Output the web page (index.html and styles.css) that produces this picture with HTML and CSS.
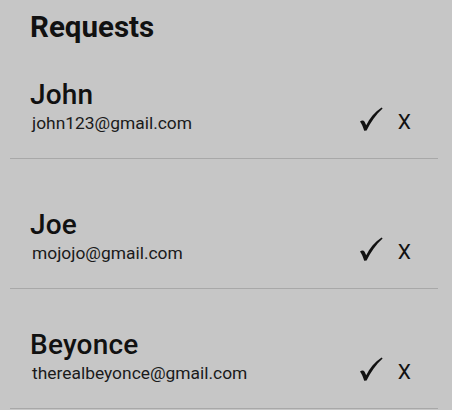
FILE: index.html
```html
<!DOCTYPE html>
<html>
<head>
<meta charset="utf-8">
<link rel="stylesheet" href="styles.css">
</head>
<body>
<div class="screen">
  <h1 class="title">Requests</h1>
  <ul class="list">
    <li class="row">
      <div class="info">
        <div class="name">John</div>
        <div class="email">john123@gmail.com</div>
      </div>
      <div class="actions">
        <svg class="accept" viewBox="0 0 24 24" width="24" height="24"><path d="M1 14.5 C2.8 13.2 4.6 13.2 5.6 14.8 L7.2 18.2 C10.5 11 15.5 5 22.6 0.4 L23.6 1.4 C17 7.5 11.5 15 7.6 23.4 L5.2 23.8 C4.2 20.4 2.8 17 1 14.5 Z"/></svg>
        <span class="reject">X</span>
      </div>
    </li>
    <li class="row">
      <div class="info">
        <div class="name">Joe</div>
        <div class="email">mojojo@gmail.com</div>
      </div>
      <div class="actions">
        <svg class="accept" viewBox="0 0 24 24" width="24" height="24"><path d="M1 14.5 C2.8 13.2 4.6 13.2 5.6 14.8 L7.2 18.2 C10.5 11 15.5 5 22.6 0.4 L23.6 1.4 C17 7.5 11.5 15 7.6 23.4 L5.2 23.8 C4.2 20.4 2.8 17 1 14.5 Z"/></svg>
        <span class="reject">X</span>
      </div>
    </li>
    <li class="row row-last">
      <div class="info">
        <div class="name">Beyonce</div>
        <div class="email">therealbeyonce@gmail.com</div>
      </div>
      <div class="actions">
        <svg class="accept" viewBox="0 0 24 24" width="24" height="24"><path d="M1 14.5 C2.8 13.2 4.6 13.2 5.6 14.8 L7.2 18.2 C10.5 11 15.5 5 22.6 0.4 L23.6 1.4 C17 7.5 11.5 15 7.6 23.4 L5.2 23.8 C4.2 20.4 2.8 17 1 14.5 Z"/></svg>
        <span class="reject">X</span>
      </div>
    </li>
  </ul>
</div>
</body>
</html>
```
FILE: styles.css
```css
html, body {
  margin: 0;
  padding: 0;
  background: #c6c6c6;
}
body {
  font-family: Roboto, "Liberation Sans", sans-serif;
  color: #111;
  width: 452px;
  height: 410px;
  overflow: hidden;
}
.screen {
  padding: 0 14px 0 10px;
}
.title {
  margin: 0;
  padding: 10px 0 0 20px;
  font-size: 29.5px;
  line-height: 34px;
  font-weight: 700;
}
.list {
  list-style: none;
  margin: 0;
  padding: 0;
}
.row {
  display: flex;
  align-items: flex-end;
  justify-content: space-between;
  height: 130px;
  box-sizing: border-box;
  padding: 0 27px 27px 20px;
  border-bottom: 1px solid #a8a8a8;
}
.row:first-child {
  height: 115px;
}
.row-last {
  height: 120px;
}
.info {
  margin-bottom: -3px;
}
.name {
  font-size: 28px;
  line-height: 34px;
  font-weight: 500;
  letter-spacing: 0.2px;
}
.email {
  font-size: 17.4px;
  line-height: 22px;
  padding-left: 2px;
  color: #1a1a1a;
}
.actions {
  display: flex;
  align-items: flex-end;
  gap: 15px;
}
.accept {
  display: block;
  fill: #111;
}
.reject {
  font-size: 21px;
  line-height: 18px;
  font-weight: 400;
}
```
